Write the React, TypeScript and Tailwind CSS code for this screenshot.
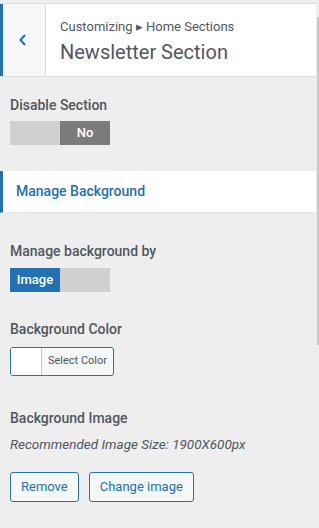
import React from 'react';

const Toggle: React.FC<{ active: 'left' | 'right'; label: string; tone: 'blue' | 'gray' }> = ({ active, label, tone }) => {
  const on = tone === 'blue' ? 'bg-[#2271b1]' : 'bg-[#7b7b7b]';
  return (
    <div className="flex w-[100px] h-[24px] text-[13px] font-medium text-white">
      <div className={`flex-1 flex items-center justify-center ${active === 'left' ? on : 'bg-[#d0d0d0]'}`}>
        {active === 'left' ? label : ''}
      </div>
      <div className={`flex-1 flex items-center justify-center ${active === 'right' ? on : 'bg-[#d0d0d0]'}`}>
        {active === 'right' ? label : ''}
      </div>
    </div>
  );
};

export default function App() {
  return (
    <div className="w-[319px] h-[528px] bg-[#eeeeee] flex overflow-hidden" style={{ fontFamily: 'Roboto, "Liberation Sans", sans-serif' }}>
      <div className="w-[316px] flex flex-col">
        <div className="h-[4px] border-b border-[#dcdcdc]" />
        {/* header */}
        <div className="flex h-[73px] bg-white border-b border-[#dddddd]">
          <div className="w-[46px] flex items-center justify-center bg-[#f6f7f7] border-l-[3px] border-[#2271b1] border-r border-r-[#dcdcde]">
            <svg width="10" height="14" viewBox="0 0 10 14" fill="none" className="-ml-[2px]">
              <path d="M7 2 L2.5 7 L7 12" stroke="#2271b1" strokeWidth="2" />
            </svg>
          </div>
          <div className="flex flex-col pl-[14px] pt-[15px]">
            <div className="text-[13px] text-[#50575e] leading-[16px]">Customizing ▸ Home Sections</div>
            <div className="text-[20px] text-[#50575e] leading-[24px] mt-[5px]">Newsletter Section</div>
          </div>
        </div>

        <div className="px-[10px] pt-[19px]">
          <div className="text-[14px] font-medium text-[#50575e] leading-[18px]">Disable Section</div>
          <div className="mt-[7px]">
            <Toggle active="right" label="No" tone="gray" />
          </div>
        </div>

        <div className="mt-[26px] h-[42px] bg-white border-l-[3px] border-[#2271b1] flex items-center pl-[13px] border-b border-b-[#e4e4e4]">
          <span className="text-[14px] font-medium text-[#2271b1]">Manage Background</span>
        </div>

        <div className="px-[10px] pt-[29px]">
          <div className="text-[14px] font-medium text-[#50575e] leading-[18px]">Manage background by</div>
          <div className="mt-[8px]">
            <Toggle active="left" label="Image" tone="blue" />
          </div>

          <div className="text-[14px] font-medium text-[#50575e] leading-[18px] mt-[28px]">Background Color</div>
          <div className="mt-[9px] flex w-[104px] h-[29px] border border-[#2271b1] rounded-[3px] overflow-hidden bg-[#f6f7f7]">
            <div className="w-[31px] bg-white border-r border-[#c3c4c7]" />
            <div className="flex-1 flex items-center justify-center text-[11px] text-[#50575e]">Select Color</div>
          </div>

          <div className="text-[14px] font-medium text-[#50575e] leading-[18px] mt-[33px]">Background Image</div>
          <div className="text-[13.5px] italic text-[#50575e] leading-[16px] mt-[9px]">Recommended Image Size: 1900X600px</div>
          <div className="mt-[20px] flex gap-[10px]">
            <button className="h-[30px] px-[10px] border border-[#2271b1] rounded-[3px] bg-[#f6f7f7] text-[13px] text-[#2271b1]">Remove</button>
            <button className="h-[30px] px-[10px] border border-[#2271b1] rounded-[3px] bg-[#f6f7f7] text-[13px] text-[#2271b1]">Change image</button>
          </div>
        </div>
      </div>
      <div className="w-[3px] flex flex-col">
        <div className="h-[17px]" />
        <div className="h-[328px] w-[2px] ml-[1px] bg-[#c8c8c8]" />
      </div>
    </div>
  );
}
